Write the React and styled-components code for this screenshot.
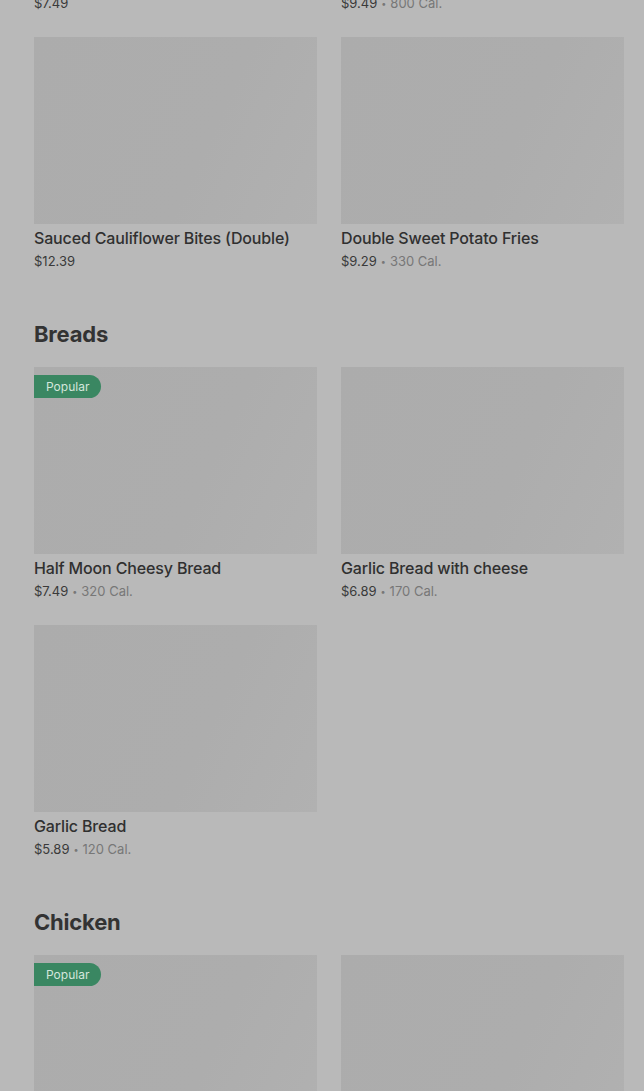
import React from "react";
import styled, { createGlobalStyle } from "styled-components";

const sections = [
  {
    title: "Sides",
    items: [
      { name: "Cauliflower Bites", price: "$7.49" },
      { name: "Sweet Potato Fries", price: "$9.49", cal: "800 Cal." },
      { name: "Sauced Cauliflower Bites (Double)", price: "$12.39" },
      { name: "Double Sweet Potato Fries", price: "$9.29", cal: "330 Cal." },
    ],
  },
  {
    title: "Breads",
    items: [
      { name: "Half Moon Cheesy Bread", price: "$7.49", cal: "320 Cal.", popular: true },
      { name: "Garlic Bread with cheese", price: "$6.89", cal: "170 Cal." },
      { name: "Garlic Bread", price: "$5.89", cal: "120 Cal." },
    ],
  },
  {
    title: "Chicken",
    items: [
      { name: "Chicken Bites", price: "$8.99", cal: "450 Cal.", popular: true },
      { name: "Chicken Wings", price: "$10.99", cal: "600 Cal." },
    ],
  },
];

const App = () => {
  return (
    <>
      <GlobalStyle />
      <Page>
        {sections.map((section, i) => (
          <Section key={section.title} first={i === 0}>
            {i > 0 && <Heading>{section.title}</Heading>}
            <Grid>
              {section.items.map((item) => (
                <Card key={item.name}>
                  <Thumb>{item.popular && <Badge>Popular</Badge>}</Thumb>
                  <Name>{item.name}</Name>
                  <Price>
                    {item.price}
                    {item.cal && (
                      <>
                        <Dot>•</Dot>
                        <Cal>{item.cal}</Cal>
                      </>
                    )}
                  </Price>
                </Card>
              ))}
            </Grid>
          </Section>
        ))}
      </Page>
    </>
  );
};

export default App;

const GlobalStyle = createGlobalStyle`
  html, body {
    margin: 0;
    padding: 0;
    background: #b9b9b9;
    overflow: hidden;
  }
  body {
    font-family: Inter, "Liberation Sans", sans-serif;
    color: #333;
  }
`;

const Page = styled.div`
  padding: 0 20px 0 34px;
  margin-top: -221px;
  height: 1312px;
  overflow: hidden;
`;

const Section = styled.section`
  margin-top: ${(props) => (props.first ? "0" : "50px")};
`;

const Heading = styled.h2`
  margin: 0 0 19px;
  height: 28px;
  font-size: 22px;
  line-height: 28px;
  font-weight: 700;
  letter-spacing: -0.2px;
  color: #333;
`;

const Grid = styled.div`
  display: grid;
  grid-template-columns: 283px 283px;
  column-gap: 24px;
  row-gap: 25px;
`;

const Card = styled.div`
  display: flex;
  flex-direction: column;
`;

const Thumb = styled.div`
  position: relative;
  height: 187px;
  background: linear-gradient(115deg, #acacac 0%, #adadad 60%, #b1b1b1 100%);
`;

const Badge = styled.span`
  position: absolute;
  top: 8px;
  left: 0;
  height: 23px;
  padding: 0 12px;
  display: flex;
  align-items: center;
  font-size: 12px;
  color: #d4e6dc;
  background: #3a8762;
  border-radius: 0 12px 12px 0;
`;

const Name = styled.div`
  margin-top: 4px;
  height: 20px;
  font-size: 16px;
  line-height: 20px;
  font-weight: 500;
  letter-spacing: -0.15px;
  color: #303030;
`;

const Price = styled.div`
  margin-top: 4px;
  height: 18px;
  display: flex;
  align-items: center;
  font-size: 13px;
  line-height: 18px;
  color: #3a3a3a;
`;

const Cal = styled.span`
  color: #777;
`;

const Dot = styled.span`
  margin: 0 4px;
  font-size: 9px;
  line-height: 1;
  color: #777;
`;
